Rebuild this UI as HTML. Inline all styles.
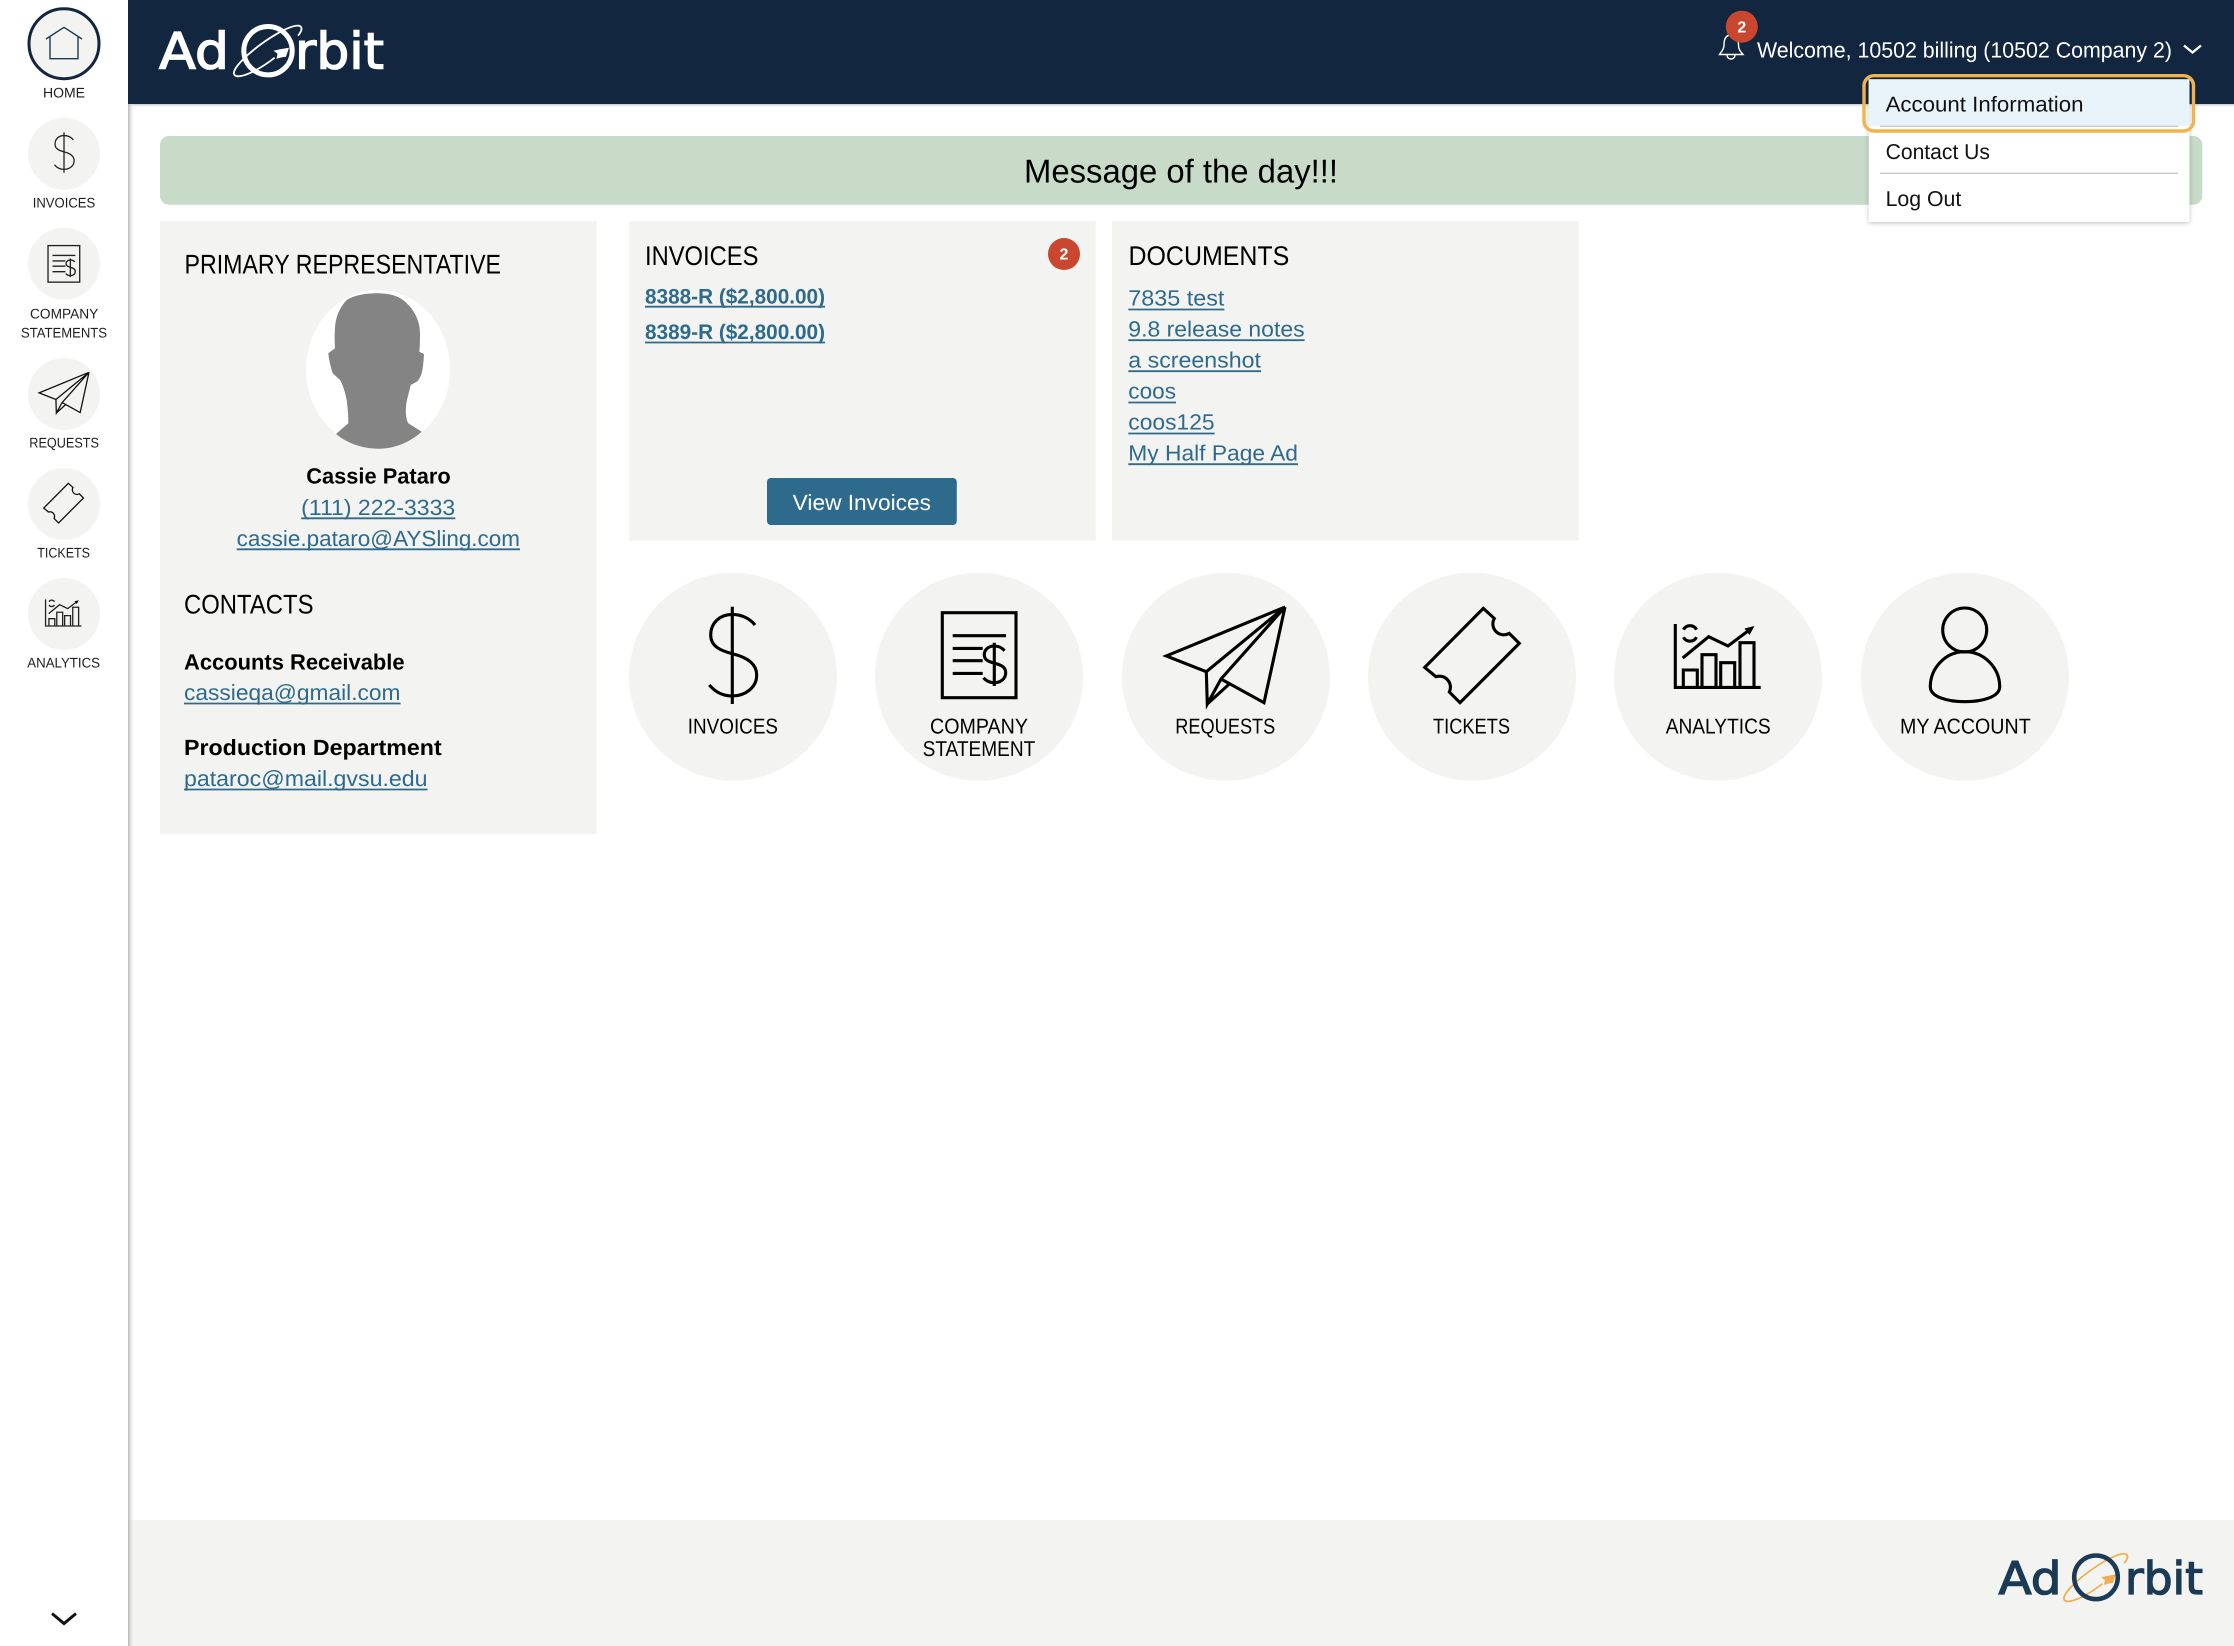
<!DOCTYPE html>
<html lang="en"><head><meta charset="utf-8"><title>AdOrbit</title>
<style>
html,body{margin:0;padding:0;background:#fff;width:2234px;height:1646px;overflow:hidden}
svg{display:block}
text{font-family:"Liberation Sans",Arial,sans-serif;fill:#000;text-rendering:geometricPrecision}
.s{font-size:14px;fill:#1e1e1e}
.h{font-size:27px}
.l{font-size:22px;fill:#2e6a8c}
.b{font-size:22px;font-weight:bold}
.m{font-size:21.5px}
.d{font-size:21.5px;fill:#111}
.u{stroke:#2e6a8c;stroke-width:1.8}
.ic{fill:none;stroke:#000;stroke-width:3.1;stroke-linejoin:miter}
.c{fill:#f3f3f1}
</style></head><body>
<svg xmlns="http://www.w3.org/2000/svg" width="2234" height="1646" viewBox="0 0 2234 1646">
<defs>
<linearGradient id="sh" x1="0" x2="1" y1="0" y2="0"><stop offset="0" stop-color="#b8b8b8"/><stop offset="1" stop-color="#fff" stop-opacity="0"/></linearGradient>
<linearGradient id="shv" x1="0" x2="0" y1="0" y2="1"><stop offset="0" stop-color="#c4c4c4"/><stop offset="1" stop-color="#fff" stop-opacity="0"/></linearGradient>
<filter id="ds" x="-10%" y="-10%" width="120%" height="120%"><feDropShadow dx="0" dy="1" stdDeviation="2.5" flood-color="#000" flood-opacity=".25"/></filter>
<g id="i-dollar"><path d="M-.7 -70V27.3"/><path d="M22 -51.7C17 -58 9 -62.3 -.7 -62.3C-13 -62.3 -22.3 -54 -22.3 -41.7C-22.3 -30 -12 -26 -.7 -23C12 -20 23.7 -14 23.7 -1.7C23.7 11 12 19.3 -.7 19.3C-10 19.3 -18 15 -23.7 8.3"/></g>
<g id="i-stmt"><rect x="-36.7" y="-64" width="73.7" height="85"/><path d="M-26.3 -41H27M-26.3 -28.3H3.7M-26.3 -16H3.7M-26.3 -3.3H3.7"/><path d="M15.3 -34V9.3M25.5 -26C23 -29 19.5 -30.7 15.5 -30.7C9.5 -30.7 5.3 -27 5.3 -22C5.3 -16.5 10 -15 15.5 -13.5C21.5 -12 26.7 -10 26.7 -4C26.7 2 21.5 6 15.5 6C11 6 7 4 4.5 1"/></g>
<g id="i-plane"><path d="M59 -69.7L-59.7 -20.7L-19.7 -5ZM-19.7 -5L-18.7 27.3L-5 2.3L59 -69.7M-18.7 27.3L3.3 7.3M-5 2.3L38 26L59 -69.7"/></g>
<g id="i-ticket"><path d="M11.3 -68.3L22.3 -58.3A11 11 0 0 0 37.3 -43.3L47.3 -33.3L-12 26L-22.7 15.3A11 11 0 0 0 -36 0L-47.3 -9.3Z"/></g>
<g id="i-chart"><path d="M-42.7 -52.7V10.7H42.7"/><path d="M-34.7 10.7V-6.7H-20.7V10.7M-16 10.7V-22H-2V10.7M2.7 10.7V-14H16.7V10.7M22 10.7V-34H36V10.7"/><path d="M-35.3 -18.7L-9.3 -40L10 -30.7L33 -48"/><path d="M36.5 -50.7L26.5 -48.2L31.5 -41.7Z" fill="#000" stroke="none"/><path d="M-34.5 -47A7.3 7.3 0 0 1 -21.5 -47M-21.5 -39.5A7.3 7.3 0 0 1 -34.5 -39.5"/></g>
</defs>

<!-- main shadows -->
<rect x="128" y="104" width="2106" height="4" fill="url(#shv)"/>
<rect x="128" y="0" width="7" height="1646" fill="url(#sh)"/>

<!-- header -->
<rect x="128" y="0" width="2106" height="104" fill="#12263f"/>
<g>
<text x="159" y="68.3" textLength="70" lengthAdjust="spacingAndGlyphs" style="font-family:'DejaVu Sans',sans-serif;font-size:50px;fill:#fff;stroke:#fff;stroke-width:1.4">Ad</text>
<text x="295" y="68.3" textLength="89" lengthAdjust="spacingAndGlyphs" style="font-family:'DejaVu Sans',sans-serif;font-size:50px;fill:#fff;stroke:#fff;stroke-width:1.4">rbit</text>
<g transform="translate(268 50.7)">
<circle r="24.2" fill="none" stroke="#fff" stroke-width="5"/>
<path d="M30 -15C34 -20 35 -24 31 -25C22 -26 -2 -12 -20 4C-33 16 -38 24 -31 25.5C-25 26.5 -10 20 6.7 7" fill="none" stroke="#fff" stroke-width="1.8"/>
<path d="M21 -3L12 -1.5L5.5 0L9.5 3L8.5 8L14 6.5L18 6Z" fill="#fff"/>
</g>
</g>

<!-- bell -->
<path transform="translate(0 -3)" d="M1731 38C1725 38 1724 44 1724 48C1724 53 1721 55 1719.5 57.5H1743C1741 55 1738.5 53 1738.5 48C1738.5 44 1737 38 1731 38ZM1727 58A4 4 0 0 0 1735 58" fill="none" stroke="#fff" stroke-width="1.4"/>
<circle cx="1741.8" cy="26.7" r="16" fill="#c9472f"/>
<text x="1741.8" y="32.3" text-anchor="middle" style="font-size:16px;font-weight:bold;fill:#fff">2</text>
<text x="1757" y="57.3" textLength="415" lengthAdjust="spacingAndGlyphs" style="font-size:22px;fill:#fff">Welcome, 10502 billing (10502 Company 2)</text>
<path d="M2184 45.5L2192.5 52.5L2201 45.5" fill="none" stroke="#fff" stroke-width="2.4"/>

<!-- sidebar -->
<circle cx="64" cy="43.7" r="35" fill="#f3f3f1" stroke="#12263f" stroke-width="3"/>
<path d="M46 39L64 27.3L82 39M50 36V58.7H78V36" fill="none" stroke="#1b3a57" stroke-width="1.4"/>
<text class="s" x="43" y="97.7" textLength="42" lengthAdjust="spacingAndGlyphs">HOME</text>

<circle class="c" cx="64" cy="153.7" r="36"/>
<use href="#i-dollar" class="ic" transform="translate(64.3 161.4) scale(.415)" style="stroke:#222"/>
<text class="s" x="32.7" y="207.6" textLength="62.6" lengthAdjust="spacingAndGlyphs">INVOICES</text>

<circle class="c" cx="64" cy="263.7" r="36"/>
<use href="#i-stmt" class="ic" transform="translate(63.8 273.1) scale(.43)" style="stroke:#222"/>
<text class="s" x="30" y="318.3" textLength="68.3" lengthAdjust="spacingAndGlyphs">COMPANY</text>
<text class="s" x="21" y="337.5" textLength="86" lengthAdjust="spacingAndGlyphs">STATEMENTS</text>

<circle class="c" cx="64" cy="394" r="36"/>
<use href="#i-plane" class="ic" transform="translate(64.2 401.6) scale(.42)" style="stroke:#111"/>
<text class="s" x="29.3" y="447.7" textLength="69.7" lengthAdjust="spacingAndGlyphs">REQUESTS</text>

<circle class="c" cx="64" cy="504" r="36"/>
<use href="#i-ticket" class="ic" transform="translate(63.6 512) scale(.42)" style="stroke:#111"/>
<text class="s" x="37.3" y="557.3" textLength="52.7" lengthAdjust="spacingAndGlyphs">TICKETS</text>

<circle class="c" cx="64" cy="614" r="36"/>
<use href="#i-chart" class="ic" transform="translate(63.5 621.5) scale(.42)" style="stroke:#222"/>
<text class="s" x="27.3" y="667.3" textLength="72.7" lengthAdjust="spacingAndGlyphs">ANALYTICS</text>

<path d="M52 1613.5L64 1623.5L76 1613.5" fill="none" stroke="#111" stroke-width="3"/>

<!-- banner -->
<rect x="160" y="136" width="2042.3" height="68.7" rx="9" fill="#c7dbc8"/>
<text x="1024" y="182.5" textLength="314" lengthAdjust="spacingAndGlyphs" style="font-size:33px">Message of the day!!!</text>

<!-- rep card -->
<rect class="c" x="160" y="221" width="436.7" height="613"/>
<text class="h" x="184.5" y="273.3" textLength="316.5" lengthAdjust="spacingAndGlyphs">PRIMARY REPRESENTATIVE</text>
<ellipse cx="378" cy="369.3" rx="72" ry="79.3" fill="#fff"/>
<path d="M376.7 293.3C390 293.3 400 296 406.7 303.3C415 311 420 322 420 333.3C420 340 420 346 419.3 351.7L424 354C423.5 362 423 368 421.7 373.3C420 378 418.5 380.5 416.7 381.7L410.7 385C409 393 406.5 400 406 406.7C405.5 413 406 419 408.3 423.3L421.7 431.7C410 442 395 448.7 378.3 448.7C362 448.7 347 443 336 434L348.3 423.3C348.5 415 347.5 407 346.7 400C345 392 343 385 340 380L332.7 373.3C330.5 367 329 360 328.3 353.3L335 348.3C334.5 341 334.5 334 335 326.7C336 316 340 307 346.7 300C355 295 366 293.3 376.7 293.3Z" fill="#848484"/>
<text class="b" x="306.2" y="483.3" textLength="144.5" lengthAdjust="spacingAndGlyphs">Cassie Pataro</text>
<text class="l" x="301.2" y="515" textLength="154" lengthAdjust="spacingAndGlyphs">(111) 222-3333</text><line class="u" x1="301.2" x2="455.3" y1="518.3" y2="518.3"/>
<text class="l" x="236.7" y="546" textLength="283.3" lengthAdjust="spacingAndGlyphs">cassie.pataro@AYSling.com</text><line class="u" x1="236.7" x2="520" y1="549.3" y2="549.3"/>
<text class="h" x="184" y="613.5" textLength="129.5" lengthAdjust="spacingAndGlyphs">CONTACTS</text>
<text class="b" x="184" y="669.5" textLength="220.6" lengthAdjust="spacingAndGlyphs">Accounts Receivable</text>
<text class="l" x="184" y="700" textLength="216.5" lengthAdjust="spacingAndGlyphs">cassieqa@gmail.com</text><line class="u" x1="184" x2="400.5" y1="703.5" y2="703.5"/>
<text class="b" x="184" y="755" textLength="257.7" lengthAdjust="spacingAndGlyphs">Production Department</text>
<text class="l" x="184" y="786" textLength="243.5" lengthAdjust="spacingAndGlyphs">pataroc@mail.gvsu.edu</text><line class="u" x1="184" x2="427.5" y1="789.5" y2="789.5"/>

<!-- invoices card -->
<rect class="c" x="629.2" y="221" width="466.6" height="319.7"/>
<text class="h" x="645" y="265" textLength="113.4" lengthAdjust="spacingAndGlyphs">INVOICES</text>
<circle cx="1064" cy="254" r="16" fill="#c9472f"/>
<text x="1064" y="259.5" text-anchor="middle" style="font-size:16px;font-weight:bold;fill:#fff">2</text>
<text class="l" x="645" y="303.3" textLength="180" lengthAdjust="spacingAndGlyphs" style="font-weight:bold;font-size:21px">8388-R ($2,800.00)</text><line class="u" x1="645" x2="825" y1="306.7" y2="306.7"/>
<text class="l" x="645" y="339" textLength="180" lengthAdjust="spacingAndGlyphs" style="font-weight:bold;font-size:21px">8389-R ($2,800.00)</text><line class="u" x1="645" x2="825" y1="342.5" y2="342.5"/>
<rect x="767" y="478" width="189.8" height="47" rx="4" fill="#2e6a8c"/>
<text x="792.7" y="510" textLength="138.3" lengthAdjust="spacingAndGlyphs" style="font-size:22px;fill:#fff">View Invoices</text>

<!-- documents card -->
<rect class="c" x="1112" y="221" width="466.6" height="319.7"/>
<text class="h" x="1128.5" y="265" textLength="160.8" lengthAdjust="spacingAndGlyphs">DOCUMENTS</text>
<text class="l" x="1128.3" y="305.6" textLength="96.1" lengthAdjust="spacingAndGlyphs">7835 test</text><line class="u" x1="1128.3" x2="1224.4" y1="309.5" y2="309.5"/>
<text class="l" x="1128.3" y="336.7" textLength="176.3" lengthAdjust="spacingAndGlyphs">9.8 release notes</text><line class="u" x1="1128.3" x2="1304.6" y1="340.2" y2="340.2"/>
<text class="l" x="1128.3" y="367.7" textLength="132.7" lengthAdjust="spacingAndGlyphs">a screenshot</text><line class="u" x1="1128.3" x2="1261" y1="371.2" y2="371.2"/>
<text class="l" x="1128.3" y="398.7" textLength="47.7" lengthAdjust="spacingAndGlyphs">coos</text><line class="u" x1="1128.3" x2="1176" y1="402.5" y2="402.5"/>
<text class="l" x="1128.3" y="429.7" textLength="86.3" lengthAdjust="spacingAndGlyphs">coos125</text><line class="u" x1="1128.3" x2="1214.6" y1="433.5" y2="433.5"/>
<text class="l" x="1128.3" y="460.7" textLength="169.7" lengthAdjust="spacingAndGlyphs">My Half Page Ad</text><line class="u" x1="1128.3" x2="1298" y1="464.2" y2="464.2"/>

<!-- big circles -->
<circle class="c" cx="733" cy="676.7" r="104"/>
<circle class="c" cx="979" cy="676.7" r="104"/>
<circle class="c" cx="1226" cy="676.7" r="104"/>
<circle class="c" cx="1472" cy="676.7" r="104"/>
<circle class="c" cx="1718" cy="676.7" r="104"/>
<circle class="c" cx="1965" cy="676.7" r="104"/>

<use href="#i-dollar" class="ic" transform="translate(733 676.7)"/>
<use href="#i-stmt" class="ic" transform="translate(979 676.7)"/>
<use href="#i-plane" class="ic" transform="translate(1226 676.7)"/>
<use href="#i-ticket" class="ic" transform="translate(1472 676.7)"/>
<use href="#i-chart" class="ic" transform="translate(1718 676.7)"/>
<g class="ic" transform="translate(1965 676.7)"><circle cx="-.3" cy="-46.7" r="22"/><path d="M-.3 -25C-20 -25 -34.7 -8 -34.7 10C-34.7 20 -18 25 -.3 25C18 25 34.7 20 34.7 10C34.7 -8 20 -25 -.3 -25Z"/></g>

<text class="m" x="687.8" y="733.3" textLength="90.2" lengthAdjust="spacingAndGlyphs">INVOICES</text>
<text class="m" x="930" y="733.3" textLength="98" lengthAdjust="spacingAndGlyphs">COMPANY</text>
<text class="m" x="922.6" y="756" textLength="112.7" lengthAdjust="spacingAndGlyphs">STATEMENT</text>
<text class="m" x="1175.3" y="733.3" textLength="100" lengthAdjust="spacingAndGlyphs">REQUESTS</text>
<text class="m" x="1433" y="733.3" textLength="77" lengthAdjust="spacingAndGlyphs">TICKETS</text>
<text class="m" x="1665.7" y="733.3" textLength="105" lengthAdjust="spacingAndGlyphs">ANALYTICS</text>
<text class="m" x="1900" y="733.3" textLength="130.7" lengthAdjust="spacingAndGlyphs">MY ACCOUNT</text>

<!-- dropdown -->
<rect x="1868.7" y="79.3" width="320.8" height="142.7" fill="#fff" filter="url(#ds)"/>
<rect x="1868.7" y="79.3" width="320.8" height="47" fill="#e9f4fa"/>
<line x1="1880" x2="2178" y1="126.3" y2="126.3" stroke="#b5b5b5" stroke-width="1"/>
<line x1="1880" x2="2178" y1="173.3" y2="173.3" stroke="#b5b5b5" stroke-width="1"/>
<rect x="1864" y="75.7" width="329.5" height="55.3" rx="10" fill="none" stroke="#f2b34c" stroke-width="3.4"/>
<text class="d" x="1885.6" y="111.7" textLength="197.9" lengthAdjust="spacingAndGlyphs">Account Information</text>
<text class="d" x="1885.6" y="159" textLength="104.4" lengthAdjust="spacingAndGlyphs">Contact Us</text>
<text class="d" x="1885.6" y="206" textLength="75.7" lengthAdjust="spacingAndGlyphs">Log Out</text>

<!-- footer -->
<rect x="130" y="1520" width="2104" height="126" fill="#f3f3f1"/>
<rect x="128" y="1520" width="7" height="126" fill="url(#sh)"/>
<text x="1998.5" y="1594" textLength="63" lengthAdjust="spacingAndGlyphs" style="font-family:'DejaVu Sans',sans-serif;font-size:45px;fill:#1b3a55;stroke:#1b3a55;stroke-width:1.3">Ad</text>
<text x="2125" y="1594" textLength="78" lengthAdjust="spacingAndGlyphs" style="font-family:'DejaVu Sans',sans-serif;font-size:45px;fill:#1b3a55;stroke:#1b3a55;stroke-width:1.3">rbit</text>
<g transform="translate(2096 1577.3) scale(.94)">
<path d="M30 -15C34 -20 35 -24 31 -25C22 -26 -2 -12 -20 4C-33 16 -38 24 -31 25.5C-25 26.5 -10 20 6.7 7" fill="none" stroke="#f2ad4e" stroke-width="1.8"/>
<path d="M21 -3L12 -1.5L5.5 0L9.5 3L8.5 8L14 6.5L18 6Z" fill="#f2ad4e"/>
<circle r="23.2" fill="none" stroke="#1b3a55" stroke-width="4.8"/>
</g>
</svg>
</body></html>
